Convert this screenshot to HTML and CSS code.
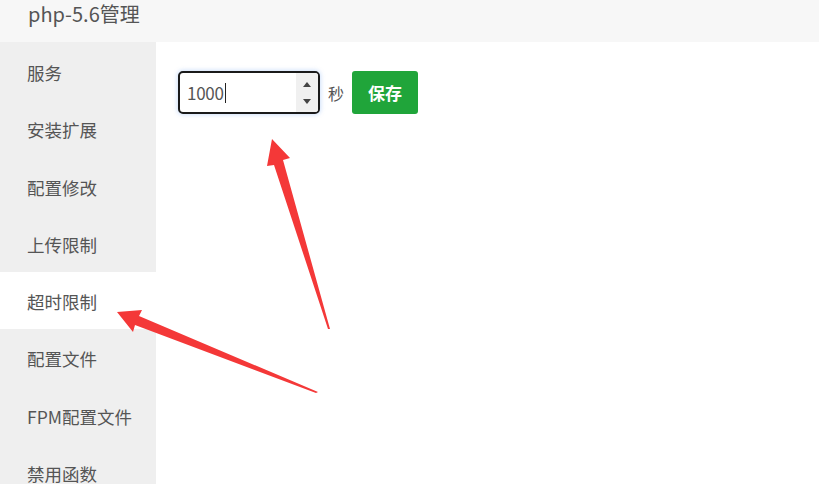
FILE: index.html
```html
<!DOCTYPE html>
<html lang="zh-CN">
<head>
<meta charset="utf-8">
<title>php-5.6管理</title>
<link rel="stylesheet" href="styles.css">
</head>
<body>
<div class="page">
  <header class="title">php-5.6管理</header>
  <div class="body">
    <nav class="side">
      <div class="item">服务</div>
      <div class="item">安装扩展</div>
      <div class="item">配置修改</div>
      <div class="item">上传限制</div>
      <div class="item active">超时限制</div>
      <div class="item">配置文件</div>
      <div class="item">FPM配置文件</div>
      <div class="item">禁用函数</div>
    </nav>
    <main class="main">
      <div class="row">
        <div class="input">
          <span class="val">1000</span><span class="caret"></span>
          <span class="spin">
            <svg width="10" height="30" viewBox="0 0 10 30"><path d="M1 9 L5 4 L9 9 Z" fill="#444"/><path d="M1 21 L5 26 L9 21 Z" fill="#444"/></svg>
          </span>
        </div>
        <span class="unit">秒</span>
        <button class="save">保存</button>
      </div>
    </main>
  </div>
  <svg class="arrows" width="819" height="484" viewBox="0 0 819 484">
    <polygon points="272,139 290,158 283,160 330,329 328,329 274,165 267,166" fill="#f43838"/>
    <polygon points="117,312 142,310 139,316 318,392 316,393 135,325 133,332" fill="#f43838"/>
  </svg>
</div>
</body>
</html>
```
FILE: styles.css
```css
html, body { margin: 0; padding: 0; }
body {
  font-family: "Noto Sans CJK SC", "Noto Sans", sans-serif;
  color: #555;
  background: #fff;
}
.page { position: relative; width: 819px; height: 484px; overflow: hidden; }
.title {
  height: 42px;
  background: #f7f7f7;
  padding-left: 28px;
  font-size: 20px;
  line-height: 27px;
  color: #555;
  box-sizing: border-box;
}
.body { display: flex; height: 442px; }
.side {
  width: 156px;
  background: #efefef;
  padding-top: 1px;
  flex-shrink: 0;
}
.item {
  height: 57.3px;
  line-height: 57.3px;
  padding-left: 27px;
  font-size: 17.5px;
  color: #555;
  padding-top: 1px;
  box-sizing: border-box;
  white-space: nowrap;
}
.item.active { background: #fff; }
.main { flex: 1; padding: 29px 0 0 22px; }
.row { display: flex; align-items: center; }
.input {
  width: 142px;
  height: 43px;
  box-sizing: border-box;
  border: 2px solid #1a1a1a;
  border-radius: 5px;
  box-shadow: 0 0 4px 1px rgba(120, 170, 240, 0.35);
  display: flex;
  align-items: center;
  padding-left: 7px;
  position: relative;
  background: #fff;
}
.val { font-size: 17px; color: #555; letter-spacing: -0.3px; }
.caret { width: 1px; height: 20px; background: #222; margin-left: 1px; }
.spin {
  margin-left: auto;
  width: 22px;
  height: 39px;
  background: #f0f0f0;
  display: flex;
  align-items: center;
  justify-content: center;
  border-radius: 0 3px 3px 0;
}
.unit { font-size: 16px; margin-left: 8px; color: #555; }
.save {
  margin-left: 8px;
  width: 66px;
  height: 43px;
  border: none;
  border-radius: 3px;
  background: #20a53a;
  color: #fff;
  font-family: "Noto Sans CJK SC", sans-serif;
  font-size: 17px;
  font-weight: bold;
  padding: 0;
}
.arrows { position: absolute; left: 0; top: 0; pointer-events: none; }
```
